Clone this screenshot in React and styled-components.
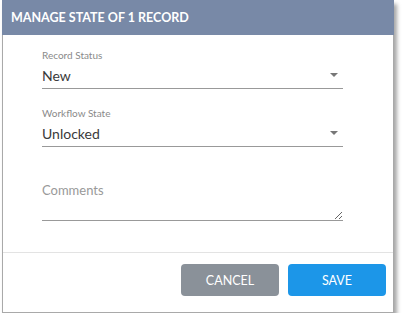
import React from "react";
import styled, { createGlobalStyle } from "styled-components";

const GlobalStyle = createGlobalStyle`
  body {
    margin: 0;
    background: #ffffff;
    font-family: Lato, "Liberation Sans", sans-serif;
  }
`;

const Dialog = styled.div`
  box-sizing: border-box;
  margin-left: 2px;
  width: 392px;
  height: 313px;
  border: 1px solid #a9a9a9;
  border-top: none;
  background: #fff;
  box-shadow: 3px 4px 4px rgba(0, 0, 0, 0.35);
  display: flex;
  flex-direction: column;
`;

const Header = styled.div`
  height: 35px;
  margin: 0 -1px;
  padding-left: 9px;
  background: #7889a7;
  color: #fff;
  font-size: 12.5px;
  font-weight: 700;
  display: flex;
  align-items: center;
`;

const Body = styled.div`
  flex: 1;
  padding: 13px 0 0 39px;
  display: flex;
  flex-direction: column;
`;

const Field = styled.div`
  width: 301px;
  margin-bottom: ${(p) => p.gap || 0}px;
  border-bottom: 1px solid #999;
`;

const Label = styled.div`
  font-size: 10px;
  line-height: 14px;
  color: #8a8a8a;
`;

const SelectRow = styled.div`
  height: 26px;
  display: flex;
  align-items: center;
  justify-content: space-between;
  font-size: 14px;
  color: #3a3a3a;
`;

const Caret = styled.span`
  width: 0;
  height: 0;
  margin-right: 5px;
  border-left: 4.5px solid transparent;
  border-right: 4.5px solid transparent;
  border-top: 4px solid #777;
`;

const Comments = styled.textarea`
  display: block;
  box-sizing: border-box;
  width: 301px;
  height: 43px;
  margin-top: 31px;
  padding: 4px 0 0;
  border: none;
  border-bottom: 1px solid #999;
  outline: none;
  resize: vertical;
  font-family: Lato, "Liberation Sans", sans-serif;
  font-size: 13px;
  color: #333;
  &::placeholder {
    color: #999;
  }
`;

const Footer = styled.div`
  border-top: 1px solid #e3e3e3;
  padding: 11px 7px 16px 0;
  display: flex;
  justify-content: flex-end;
  gap: 9px;
`;

const Button = styled.button`
  width: 98px;
  height: 32px;
  border: none;
  border-radius: 4px;
  background: ${(p) => (p.primary ? "#1c96e8" : "#8a9199")};
  color: #fff;
  font-family: Lato, "Liberation Sans", sans-serif;
  font-size: 12.5px;
  cursor: pointer;
`;

const Select = ({ label, value, gap }) => (
  <Field gap={gap}>
    <Label>{label}</Label>
    <SelectRow>
      {value}
      <Caret />
    </SelectRow>
  </Field>
);

export default function App() {
  return (
    <>
      <GlobalStyle />
      <Dialog>
        <Header>MANAGE STATE OF 1 RECORD</Header>
        <Body>
          <Select label="Record Status" value="New" gap={17} />
          <Select label="Workflow State" value="Unlocked" />
          <Comments placeholder="Comments" />
        </Body>
        <Footer>
          <Button>CANCEL</Button>
          <Button primary>SAVE</Button>
        </Footer>
      </Dialog>
    </>
  );
}
